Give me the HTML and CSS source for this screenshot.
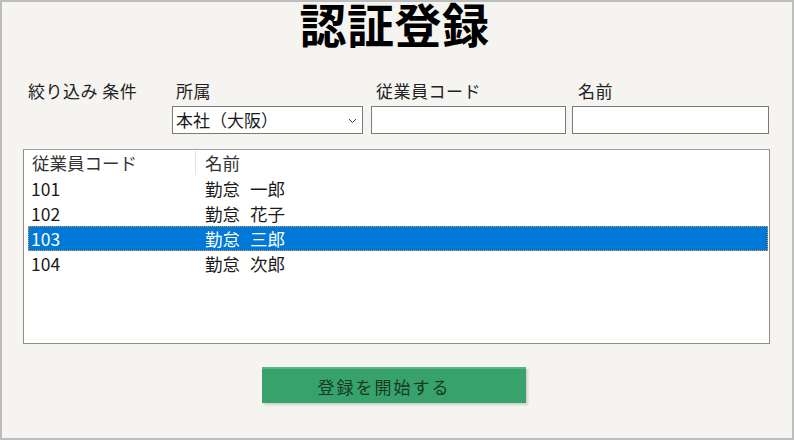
FILE: index.html
```html
<!DOCTYPE html>
<html lang="ja">
<head>
<meta charset="utf-8">
<title>認証登録</title>
<link rel="stylesheet" href="styles.css">
</head>
<body>
<div class="window">
  <h1 class="title">認証登録</h1>
  <div class="filters">
    <div class="filter-caption">絞り込み 条件</div>
    <div class="field field-dept">
      <label class="field-label">所属</label>
      <div class="select">
        <span class="select-value">本社（大阪）</span>
        <svg class="chevron" width="9" height="6" viewBox="0 0 9 6"><path d="M1 1 L4.5 4.5 L8 1" fill="none" stroke="#444" stroke-width="1"/></svg>
      </div>
    </div>
    <div class="field field-code">
      <label class="field-label">従業員コード</label>
      <div class="textbox"></div>
    </div>
    <div class="field field-name">
      <label class="field-label">名前</label>
      <div class="textbox"></div>
    </div>
  </div>
  <div class="listbox">
    <div class="list-row list-header">
      <div class="col-code">従業員コード</div>
      <div class="col-name">名前</div>
    </div>
    <div class="list-row"><div class="col-code">101</div><div class="col-name">勤怠 一郎</div></div>
    <div class="list-row"><div class="col-code">102</div><div class="col-name">勤怠 花子</div></div>
    <div class="list-row selected"><div class="col-code">103</div><div class="col-name">勤怠 三郎</div></div>
    <div class="list-row"><div class="col-code">104</div><div class="col-name">勤怠 次郎</div></div>
  </div>
  <div class="actions">
    <button class="start-btn">登録を開始する</button>
  </div>
</div>
</body>
</html>
```

FILE: styles.css
```css
html, body {
  margin: 0;
  padding: 0;
  background: #f5f4f0;
}
.window {
  width: 794px;
  height: 440px;
  box-sizing: border-box;
  border: 2px solid #bdbdbd;
  background: #f5f4f0;
  font-family: "Noto Sans CJK JP", "Noto Sans", sans-serif;
  font-size: 17px;
  color: #1a1a1a;
}
.title {
  margin: -2px 0 0 0;
  height: 53px;
  line-height: 53px;
  font-family: "Liberation Sans", "Noto Sans CJK JP", sans-serif;
  font-size: 47px;
  font-weight: 700;
  text-align: center;
  color: #000;
  padding-right: 5px;
  letter-spacing: 0.5px;
}
.filters {
  display: flex;
  margin-top: 27px;
  padding-left: 26px;
  align-items: flex-start;
}
.filter-caption {
  width: 144px;
  line-height: 22px;
  color: #222;
  letter-spacing: 0.5px;
}
.field {
  display: flex;
  flex-direction: column;
  gap: 4px;
}
.field-label {
  line-height: 22px;
  padding-left: 4px;
  color: #222;
  letter-spacing: 0.5px;
}
.field-dept { width: 191px; }
.field-code { width: 195px; margin-left: 8px; }
.field-code .field-label { padding-left: 5px; }
.field-name { width: 197px; margin-left: 6px; }
.field-name .field-label { padding-left: 6px; }
.select {
  box-sizing: border-box;
  height: 28px;
  border: 1px solid #7a7a7a;
  background: #fff;
  display: flex;
  align-items: center;
  justify-content: space-between;
  padding: 0 5px 0 3px;
}
.select-value {
  line-height: 26px;
}
.chevron { margin-top: 1px; }
.textbox {
  box-sizing: border-box;
  height: 28px;
  border: 1px solid #7a7a7a;
  background: #fff;
}
.listbox {
  box-sizing: border-box;
  margin: 15px 0 0 21px;
  width: 747px;
  height: 195px;
  border: 1px solid #8e8e8e;
  border-top-color: #a0a0a0;
  background: #fff;
  padding: 0 1px 0 4px;
  font-size: 17.5px;
}
.list-row {
  display: flex;
  height: 25px;
  line-height: 25px;
  box-sizing: border-box;
  color: #1a1a1a;
}
.list-header {
  height: 26px;
  line-height: 26px;
  color: #333;
}
.list-header .col-code {
  padding-left: 4px;
  border-right: 1px solid #e3e3e3;
  height: 24px;
  margin-top: 1px;
  line-height: 24px;
}
.col-code {
  width: 168px;
  padding-left: 3px;
  box-sizing: border-box;
}
.col-name {
  padding-left: 9px;
  word-spacing: 6px;
}
.list-row.selected {
  background: #0078d7;
  color: #fff;
  border: 1px dotted #e39a3c;
  line-height: 23px;
}
.list-row.selected .col-code { padding-left: 2px; }
.list-row.selected .col-name { padding-left: 8px; }
.actions {
  margin-top: 23px;
  padding-left: 260px;
}
.start-btn {
  width: 264px;
  height: 36px;
  border: none;
  border-top: 2px solid #5bb487;
  background: #37a26c;
  color: #173826;
  font-family: "Noto Sans CJK JP", "Noto Sans", sans-serif;
  font-size: 17px;
  letter-spacing: 2px;
  box-shadow: 2px 2px 2px rgba(0, 0, 0, 0.15);
  padding: 0 20px 0 0;
  cursor: pointer;
}
```
